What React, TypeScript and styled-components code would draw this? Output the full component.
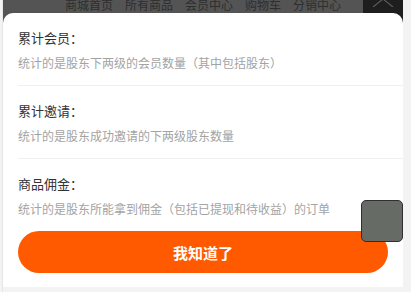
import React from 'react';
import styled, { createGlobalStyle } from 'styled-components';

const Global = createGlobalStyle`
  html, body {
    margin: 0;
    padding: 0;
    background: #f3f3f3;
  }
  body {
    font-family: "Noto Sans CJK SC", "Noto Sans", sans-serif;
  }
`;

const Page = styled.div`
  position: relative;
  width: 411px;
  height: 292px;
  overflow: hidden;
  background: #f3f3f3;
  display: flex;
  padding-left: 3px;
  box-sizing: border-box;
`;

const Frame = styled.div`
  width: 400px;
  display: flex;
  flex-direction: column;
  border-left: 1px solid #e6e6e6;
  margin-left: -1px;
`;

const NavBar = styled.div`
  height: 24px;
  display: flex;
  background: #545454;
  flex-shrink: 0;
`;

const NavLinks = styled.div`
  flex: 1;
  display: flex;
  gap: 12px;
  padding-left: 62px;
  font-size: 12px;
  line-height: 12px;
  color: #2e2e2e;
  margin-top: -1px;
`;

const TopButton = styled.div`
  width: 40px;
  background: #1e1e1e;
  display: flex;
  justify-content: center;
`;

const Modal = styled.div`
  margin-top: -11px;
  background: #ffffff;
  border-radius: 10px 10px 0 0;
  padding: 0 0 14px 15px;
`;

const Section = styled.div<{ $last?: boolean }>`
  padding: 15px 0 13px;
  border-bottom: ${p => (p.$last ? 'none' : '1px solid #f0f0f0')};
`;

const Title = styled.div`
  font-size: 13px;
  line-height: 20px;
  color: #333333;
`;

const Desc = styled.div`
  margin-top: 6px;
  font-size: 12px;
  line-height: 18px;
  color: #a3a3a3;
`;

const Button = styled.button`
  display: block;
  width: 370px;
  height: 42px;
  border: none;
  border-radius: 21px;
  background: #ff5a00;
  color: #ffffff;
  font-family: "Noto Sans CJK SC", sans-serif;
  font-size: 15px;
  font-weight: bold;
  cursor: pointer;
`;

const FloatBox = styled.div`
  position: absolute;
  left: 361px;
  top: 200px;
  width: 40px;
  height: 40px;
  background: #676b66;
  border: 1px solid #2f2f2f;
  border-radius: 5px;
`;

const items = [
  { title: '累计会员：', desc: '统计的是股东下两级的会员数量（其中包括股东）' },
  { title: '累计邀请：', desc: '统计的是股东成功邀请的下两级股东数量' },
  { title: '商品佣金：', desc: '统计的是股东所能拿到佣金（包括已提现和待收益）的订单' },
];

const navs = ['商城首页', '所有商品', '会员中心', '购物车', '分销中心'];

export default function App() {
  return (
    <Page>
      <Global />
      <Frame>
        <NavBar>
          <NavLinks>
            {navs.map(n => (
              <span key={n}>{n}</span>
            ))}
          </NavLinks>
          <TopButton>
            <svg width="26" height="7" viewBox="0 0 26 7">
              <path d="M3 7 L13 -1 L23 7" fill="none" stroke="#5a5a5a" strokeWidth="1.2" />
            </svg>
          </TopButton>
        </NavBar>
        <Modal>
          {items.map((it, i) => (
            <Section key={it.title} $last={i === items.length - 1}>
              <Title>{it.title}</Title>
              <Desc>{it.desc}</Desc>
            </Section>
          ))}
          <Button>我知道了</Button>
        </Modal>
      </Frame>
      <FloatBox />
    </Page>
  );
}
